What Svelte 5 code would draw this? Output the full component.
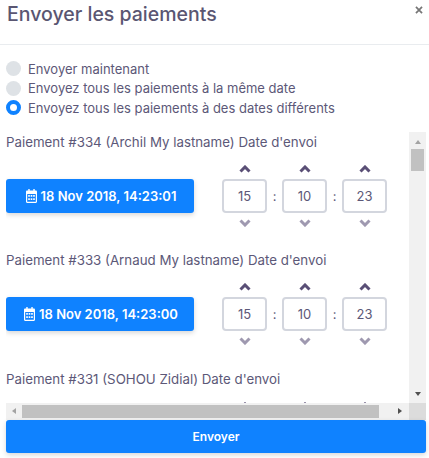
<script>
  let mode = $state('dates');
  const modes = [
    { id: 'now', label: 'Envoyer maintenant' },
    { id: 'same', label: 'Envoyez tous les paiements à la même date' },
    { id: 'dates', label: 'Envoyez tous les paiements à des dates différents' }
  ];
  const payments = [
    { id: 334, name: 'Archil My lastname', date: '18 Nov 2018, 14:23:01', time: ['15', '10', '23'] },
    { id: 333, name: 'Arnaud My lastname', date: '18 Nov 2018, 14:23:00', time: ['15', '10', '23'] },
    { id: 331, name: 'SOHOU Zidial', date: '18 Nov 2018, 14:22:58', time: ['15', '10', '23'] }
  ];
</script>

<div class="modal">
  <header class="head">
    <h1>Envoyer les paiements</h1>
    <button class="close" aria-label="Fermer">
      <svg viewBox="0 0 10 10" width="8" height="8"><path d="M1.2 1.2l7.6 7.6M8.8 1.2L1.2 8.8" /></svg>
    </button>
  </header>

  <div class="modes">
    {#each modes as m}
      <button class="mode" onclick={() => (mode = m.id)}>
        <span class="radio" class:on={mode === m.id}></span>
        {m.label}
      </button>
    {/each}
  </div>

  <div class="scroller">
    <div class="list">
      {#each payments as p}
        <section class="payment">
          <p class="title">Paiement #{p.id} ({p.name}) Date d'envoi</p>
          <div class="row">
            <button class="date">
              <svg viewBox="0 0 12 14" width="11" height="14" preserveAspectRatio="none">
                <path class="cal" fill-rule="evenodd" d="M2.500 0h1.500v1.500h4V0h1.500v1.500h1.300c.6 0 1.200.5 1.200 1.200v10.100c0 .7-.6 1.200-1.200 1.200H1.200c-.6 0-1.200-.5-1.200-1.200V2.700c0-.7.6-1.200 1.200-1.200h1.300zM1.300 5v7.700h9.400V5zM2.400 6h1.800v1.700H2.400zM5.100 6h1.800v1.700H5.100zM7.800 6h1.800v1.700H7.800zM2.400 9.300h1.800V11H2.400zM5.100 9.300h1.800V11H5.100zM7.800 9.300h1.800V11H7.800z" />
              </svg>
              {p.date}
            </button>
            <div class="time">
              {#each p.time as t, i}
                {#if i > 0}<span class="sep">:</span>{/if}
                <div class="spin">
                  <svg class="up" viewBox="0 0 12 8" width="12" height="8"><path d="M1.500 6.500L6 2l4.500 4.500" /></svg>
                  <span class="val">{t}</span>
                  <svg class="down" viewBox="0 0 12 8" width="12" height="8"><path d="M1.500 1.500L6 6l4.500-4.500" /></svg>
                </div>
              {/each}
            </div>
          </div>
        </section>
      {/each}
    </div>

    <div class="vbar">
      <span class="arrow a-up"></span>
      <span class="thumb-v"></span>
      <span class="fill"></span>
      <span class="arrow a-down"></span>
    </div>
    <div class="hbar">
      <span class="arrow a-left"></span>
      <span class="thumb-h"></span>
      <span class="arrow a-right"></span>
    </div>
    <div class="corner"></div>
  </div>

  <button class="send">Envoyer</button>
</div>

<style>
  :global(body) { margin: 0; background: #fff; }
  .modal {
    width: 429px; height: 458px; box-sizing: border-box; overflow: hidden;
    display: flex; flex-direction: column;
    font-family: Inter, "Liberation Sans", sans-serif; color: #5c5878;
  }
  button { font-family: inherit; border: none; background: none; padding: 0; cursor: pointer; color: inherit; }

  .head {
    height: 45px; box-sizing: border-box; flex-shrink: 0;
    display: flex; justify-content: space-between; align-items: flex-start;
    padding: 4px 6px 0 7px; border-bottom: 1px solid #e9ecef;
  }
  h1 { margin: 0; font-size: 19.500px; line-height: 21px; font-weight: 500; color: #5a5672; }
  .close { height: 12px; margin-top: 2px; display: flex; }
  .close path { stroke: #777; stroke-width: 2.2; fill: none; }

  .modes { display: flex; flex-direction: column; padding: 14px 6px 0; gap: 0; }
  .mode {
    display: flex; align-items: center; gap: 7px; height: 19.500px;
    font-size: 13px; color: #5c5878; text-align: left;
  }
  .radio { width: 15px; height: 15px; border-radius: 50%; background: #dee2e6; box-sizing: border-box; flex-shrink: 0; }
  .radio.on { background: #fff; border: 4.500px solid #0f82ff; }

  .scroller {
    flex-shrink: 0; margin: 14px 3px 0 6px; height: 288px;
    display: grid; grid-template-columns: 403px 17px; grid-template-rows: 271px 17px;
  }
  .list { overflow: hidden; }
  .payment { height: 118.500px; }
  .title { margin: 0; padding-top: 1px; font-size: 13.300px; line-height: 18px; color: #5c5878; white-space: nowrap; }
  .row { display: flex; align-items: flex-start; padding-top: 28px; }
  .date {
    width: 188px; height: 34px; box-sizing: border-box; padding-left: 2px; border-radius: 3px; flex-shrink: 0;
    background: #0f82ff; color: #fff; font-size: 13px; font-weight: 600;
    display: flex; align-items: center; justify-content: center; gap: 4px;
    box-shadow: 0 2px 5px rgba(0, 0, 0, 0.16);
  }
  .cal { fill: #fff; }
  .time { display: flex; align-items: flex-start; margin-left: 28px; }
  .sep { width: 15px; height: 34px; line-height: 34px; text-align: center; font-size: 13px; }
  .spin { width: 45px; height: 34px; position: relative; }
  .val {
    display: block; box-sizing: border-box; width: 45px; height: 34px; line-height: 30px;
    border: 2px solid #d3d6de; border-radius: 4px; text-align: center; font-size: 13px; color: #5c5878;
  }
  .spin svg { position: absolute; left: 16.500px; fill: none; stroke-width: 3; }
  .up { top: -14px; stroke: #5a4f76; }
  .down { bottom: -14px; stroke: #9f99b0; }

  .vbar { grid-column: 2; grid-row: 1; background: #f1f1f1; display: flex; flex-direction: column; align-items: center; }
  .hbar { grid-column: 1; grid-row: 2; background: #f1f1f1; display: flex; align-items: center; }
  .corner { grid-column: 2; grid-row: 2; background: #dcdcdc; }
  .fill { flex: 1; }
  .thumb-v { width: 13px; height: 22px; background: #c1c1c1; margin: 1.500px 0 0; }
  .thumb-h { width: 357px; height: 13px; background: #c1c1c1; margin-left: 0; }
  .arrow { width: 0; height: 0; flex-shrink: 0; }
  .a-up { margin: 8px 0 4px; border: 3.500px solid transparent; border-top: 0; border-bottom: 4px solid #a3a3a3; }
  .a-down { margin: 5px 0 7px; border: 3.500px solid transparent; border-bottom: 0; border-top: 4px solid #505050; }
  .a-left { margin: 0 6px 0 6px; border: 3.500px solid transparent; border-left: 0; border-right: 4px solid #a3a3a3; }
  .a-right { margin-left: 19px; border: 3.500px solid transparent; border-right: 0; border-left: 4px solid #505050; }

  .send {
    flex-shrink: 0; margin: 0 3px 0 6px; width: 420px; height: 33px; border-radius: 3px;
    background: #0f82ff; color: #fff; font-size: 12px; font-weight: 600;
    box-shadow: 0 2px 5px rgba(0, 0, 0, 0.16);
  }
</style>
